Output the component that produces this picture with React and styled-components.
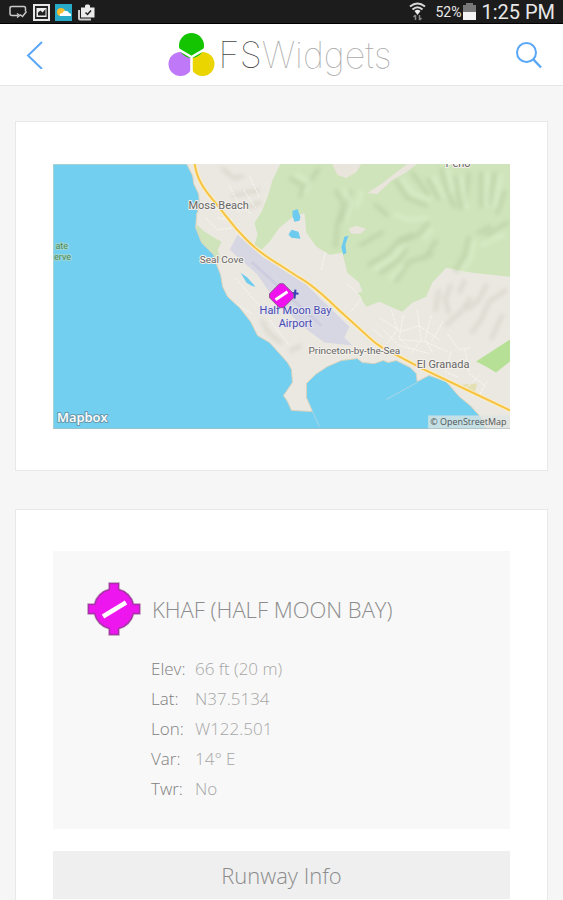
import React from 'react';
import styled, { createGlobalStyle } from 'styled-components';

const GlobalStyle = createGlobalStyle`
  * {
    box-sizing: border-box;
  }

  html {
    scrollbar-width: none;
  }

  body {
    margin: 0;
    background-color: #f6f6f6;
    color: #a0a0a0;
    font-family: 'Open Sans', sans-serif;
    font-weight: 300;
  }
`;

const StatusBar = styled.div`
  display: flex;
  justify-content: space-between;
  align-items: center;
  height: 24px;
  padding: 0 8px;
  background-color: #1c1c1c;
  border-bottom: 1px solid #000;
  color: #e8e8e8;
  font-family: Roboto, sans-serif;
  font-weight: 400;
`;

const StatusGroup = styled.div`
  display: flex;
  align-items: center;
  gap: ${(props) => props.$gap}px;
`;

const BatteryLevel = styled.span`
  margin-left: 7px;
  font-size: 14px;
  line-height: 24px;
`;

const Clock = styled.span`
  margin-left: 3px;
  font-size: 20px;
  line-height: 24px;
`;

const Header = styled.header`
  display: flex;
  justify-content: space-between;
  align-items: center;
  height: 62px;
  padding: 0 16px;
  background-color: #fff;
  border-bottom: 1px solid #e6e6e6;
`;

const IconButton = styled.button`
  display: flex;
  padding: 4px;
  background: none;
  border: 0;
  color: #5aa7f7;
  cursor: pointer;
`;

const Brand = styled.a`
  display: flex;
  align-items: center;
  gap: 4px;
  margin-right: 4px;
  color: #a8a8a8;
  font-family: Inter, sans-serif;
  font-size: 36px;
  font-weight: 100;
  line-height: 44px;
  text-decoration: none;
`;

const BrandStrong = styled.span`
  color: #444;
`;

const Content = styled.main`
  display: flex;
  flex-direction: column;
  gap: 38px;
  padding: 35px 15px;
`;

const Card = styled.section`
  display: flex;
  flex-direction: column;
  gap: 22px;
  padding: 41px 37px;
  background-color: #fff;
  border: 1px solid #e8e8e8;
`;

const MapPicture = styled.svg`
  display: block;
  width: 100%;
  height: auto;
  margin-top: 1px;
`;

const MapLabel = styled.text`
  fill: ${(props) => props.$color || '#666'};
  font-family: ${(props) => (props.$open ? "'Open Sans'" : 'Roboto')}, sans-serif;
  font-size: ${(props) => props.$size || 10}px;
  font-weight: ${(props) => props.$weight || 400};
  paint-order: stroke;
  stroke: ${(props) => props.$halo || '#f4f1ec'};
  stroke-width: 2px;
  stroke-linejoin: round;
  text-anchor: ${(props) => props.$anchor || 'middle'};
`;

const InfoPanel = styled.div`
  padding: 31px 34px 25px;
  background-color: #f8f8f8;
`;

const InfoHeading = styled.div`
  display: flex;
  align-items: center;
  gap: 11px;
`;

const InfoTitle = styled.h1`
  margin: 0;
  color: #8c8c8c;
  font-size: 22px;
  font-weight: 300;
  line-height: 30px;
`;

const InfoList = styled.dl`
  margin: 18px 0 0 64px;
  font-size: 17px;
  line-height: 30px;
`;

const InfoRow = styled.div`
  display: flex;
`;

const InfoLabel = styled.dt`
  width: 44px;
  color: #808080;
`;

const InfoValue = styled.dd`
  margin: 0;
  color: #a6a6a6;
`;

const SectionButton = styled.button`
  height: 48px;
  padding: 0;
  background-color: #efefef;
  border: 0;
  color: #8c8c8c;
  font-family: inherit;
  font-size: 22px;
  font-weight: 300;
  line-height: 30px;
  cursor: pointer;
`;

const airport = [
  { label: 'Elev:', value: '66 ft (20 m)' },
  { label: 'Lat:', value: 'N37.5134' },
  { label: 'Lon:', value: 'W122.501' },
  { label: 'Var:', value: '14° E' },
  { label: 'Twr:', value: 'No' },
];

const highway =
  'M195 164C197 178 203 188 215 202L227 217Q236 229 247 240C257 250 268 258 280 265L300 278C318 288 332 304 347 317L370 338Q376 344 383 348L423 369L467 390L511 411';

// Dark and light sides of the ridges
const ridges = [
  'M290 178l14 8l-4 12M320 168l-14 20M336 190l8 14l-6 20l-2 24M352 190l-4 18l-6 14',
  'M375 204l14 12M396 180l12 18l20 8M412 172l18 24M428 178l12 22M442 168l6 24l8 16M456 176l6 34M470 172l-4 32M482 172v36M496 172l-6 34M506 190l-8 24',
  'M368 266l20-12l12-14l14-6M380 274l20-14l8-12M396 282l14-20l24-8M430 222l-10 12l-20 10M438 240l-14 20M470 236l-4 18l-10 18M492 226l-14 8M510 222l-24 14M360 246l24-14',
];

const lightRidges = [
  'M296 174l14 8l-4 12M344 188l8 14l-6 20M362 190l-4 18M402 178l12 16l18 6M434 176l12 22M448 168l6 24M462 176l6 34M488 172v36M502 174l-6 34',
  'M374 270l20-12l12-14M390 280l14-14M434 228l-10 12M476 240l-4 18l-10 14M506 234l-24 12M394 214l16 6l20-2',
];

const barren = [
  'M440 290l-4 22M452 284l-6 16l4 14M472 298l-10 14l-16 14M488 284l-8 16l-12 10M508 290l-18 12l-8 18l-10 14M504 314l-12 26M466 280l-6 14',
  'M222 168l12 10l10-2M232 196l28-6M248 208l14-6M262 320l6 12l14 12M290 352l12-6',
];

const streets = [
  'M380 318l22 14l18-6l20 14M392 310l6 20l-10 14M404 316l-4 22l12 12M418 310l4 30l-10 14M432 316l-6 24l8 14M444 322l-12 20M400 340l26 2l22 10M384 330l16 16l30 8M448 334l12 16l12-2M452 352l-6 20l14 6M466 350l4 24l16 12M480 376l-14 14M488 382l-8 14M374 330l10 8',
  'M214 210l14-6l12 8M218 218l16 2M230 186l10 20l12 8M240 240l14 10M206 218l12 12l14-2M244 190l12 18M250 176l10 22M322 270l4-18M348 284l14 14l-10 14M230 300l22 14M236 278l20 24l14 14M270 320l20 26',
];

const AirportGlyph = ({ size = 54 }) => (
  <svg width={size} height={size} viewBox="0 0 54 54" aria-hidden="true">
    <path
      d="M22.500 1.500h9v6a20 20 0 0 1 14.800 15h6.200v9h-6.200a20 20 0 0 1-14.800 15v6h-9v-6a20 20 0 0 1-14.800-15H1.500v-9h6.200a20 20 0 0 1 14.800-15z"
      fill="#dcdcdc"
      stroke="#d6d9d3"
      strokeWidth="3"
    />
    <path
      d="M22.500 1.500h9v6a20 20 0 0 1 14.800 15h6.200v9h-6.200a20 20 0 0 1-14.800 15v6h-9v-6a20 20 0 0 1-14.800-15H1.500v-9h6.200a20 20 0 0 1 14.800-15z"
      fill="#ee16ee"
      stroke="#ad2fae"
      strokeWidth="1.500"
    />
    <path d="M16 34.500L39 20.500" stroke="#fff" strokeWidth="4.500" />
  </svg>
);

const AirportMap = () => (
  <MapPicture viewBox="53 164 458 266" role="img" aria-label="Map of Half Moon Bay Airport">
    <defs>
      <filter id="soft">
        <feGaussianBlur stdDeviation="2" />
      </filter>
    </defs>
    <rect x="53" y="164" width="458" height="266" fill="#ebe8e1" />

    <g fill="#cfe4ba">
      <path d="M281 164L273 180L268 197L262 212L255 223L258 235L255 245L262 250L270 242L280 228L293 217L305 213L307 233L317 247L330 255L343 253L348 273L360 283L363 292L358 293L367 307L380 302L403 312L413 303L427 297L433 283L447 268L473 273L511 277V164z" />
      <path d="M197 225L205 232L213 237L222 242L218 250L221 258L218 266L212 255L202 244L196 232z" />
      <path d="M477 362L511 340V362L497 373L487 367z" fill="#b5e096" />
      <path d="M463 385l15-1l-2 9z" fill="#e3e0b4" />
    </g>
    <g fill="#e9e5dd">
      <path d="M333 164L338 175L347 178L357 172L362 164z" />
      <path d="M368 193L382 184L400 170L408 164H418L406 173L392 181L378 194z" />
      <path d="M349 229l8-3l10 3l-6 5h-9z" />
    </g>

    <g fill="none" filter="url(#soft)" strokeLinejoin="round">
      {ridges.map((d) => (
        <path key={d} d={d} stroke="#b4ca9e" strokeWidth="4" opacity="0.6" />
      ))}
      {lightRidges.map((d) => (
        <path key={d} d={d} stroke="#dcf0cc" strokeWidth="4" opacity="0.7" />
      ))}
      {barren.map((d) => (
        <path key={d} d={d} stroke="#d3cfc5" strokeWidth="4" opacity="0.65" />
      ))}
    </g>
    <g fill="none" stroke="#f7f5f1" strokeWidth="1" strokeDasharray="3 1">
      {streets.map((d) => (
        <path key={d} d={d} />
      ))}
    </g>

    <path
      d="M238 235L263 257L307 285L350 327L345 338L353 346L325 343L305 328L275 300L258 275L230 250z"
      fill="#d7d7e3"
    />
    <path d="M252 262L322 326" stroke="#cdcddf" strokeWidth="3" />

    {/* Ocean, with the headland and the harbour cut into it */}
    <path
      d="M53 164H187L193 176L194 184L199 194L200 206L197 214L196 228L202 243L214 255L217 265L221 275L223 287L228 297L240 308L251 322L258 336L270 343L280 354L288 363L292 370L293 383L284 396L288 402L292 411L313 412L307 398V384L316 375L328 367L342 361L358 359L363 363L375 364L384 361L389 363L397 361L411 368L417 374L418 382L430 376L447 382L460 397L471 406L482 418L487 430H53z"
      fill="#73cff0"
      stroke="#d9d3bd"
      strokeWidth="1"
    />
    <path d="M313 412l7 15M387 400l31-17" stroke="#a9d5e2" strokeWidth="1" />
    <g fill="#6ccbee">
      <path d="M293 211l5-2l3 8l-1 4l-5 1l-2-6z" />
      <path d="M292 230l7 2l2 7l-9-1l-3-3z" />
      <path d="M345 237l4-1l-3 9l1 8l-3 2l-2-7z" />
      <path d="M241 273l7 5l8 9l-4-1l-5-3z" />
    </g>

    <path d={highway} fill="none" stroke="#fbeec4" strokeWidth="4" />
    <path d={highway} fill="none" stroke="#f6c343" strokeWidth="2" />

    <MapLabel x="219" y="209" $size="11">Moss Beach</MapLabel>
    <MapLabel x="222" y="263">Seal Cove</MapLabel>
    <MapLabel x="355" y="354">Princeton-by-the-Sea</MapLabel>
    <MapLabel x="444" y="368" $size="11">El Granada</MapLabel>
    <MapLabel x="459" y="167" $size="11">Peño</MapLabel>
    <MapLabel x="68" y="249" $size="9" $color="#4e8a60" $halo="#9fd6cf" $anchor="end">ate</MapLabel>
    <MapLabel x="71" y="260" $size="9" $color="#4e8a60" $halo="#9fd6cf" $anchor="end">erve</MapLabel>
    <MapLabel x="296" y="314" $size="11" $color="#4a4bb0" $halo="#e6e6ef">Half Moon Bay</MapLabel>
    <MapLabel x="296" y="327" $size="11" $color="#4a4bb0" $halo="#e6e6ef">Airport</MapLabel>

    <path d="M291 293l8 1M296 290l-1 9" stroke="#3540b4" strokeWidth="2" />
    <path
      d="M280 284h4l10 10v4l-10 10h-4l-10-10v-4z"
      fill="#f012ee"
      stroke="#8f5590"
      strokeWidth="1"
    />
    <path d="M276 300L288 292" stroke="#fff" strokeWidth="3" />

    <MapLabel x="57" y="423" $open $size="13" $weight="600" $color="#fff" $halo="#6a9aac" $anchor="start">
      Mapbox
    </MapLabel>
    <rect x="429" y="416" width="82" height="14" fill="#dfe5e2" opacity="0.75" />
    <MapLabel x="431" y="426" $size="9" $color="#555" $halo="none" $open $anchor="start">
      © OpenStreetMap
    </MapLabel>
    <path d="M53 429.500H511" stroke="#a9b8b8" strokeWidth="1" />
  </MapPicture>
);

const StatusIcons = () => (
  <svg width="90" height="18" viewBox="8 3 90 18" aria-hidden="true">
    <path d="M18 15.500h-6q-2 0-2-2V8q0-1.500 2-1.500h12q1.500 0 1.500 2v3" fill="none" stroke="#c9c9c9" strokeWidth="1.500" />
    <path d="M17 13.500l2.500 2l-2.500 2M20 14.500l2.500 2l4-5" fill="none" stroke="#c9c9c9" strokeWidth="1.500" />
    <rect x="34" y="5" width="15" height="15" fill="#222" stroke="#e8e8e8" strokeWidth="2" />
    <path d="M36.500 8h10v9h-10z" fill="#eee" />
    <path d="M38 15.500v-3l2.500-2l2 2l3-3.500v6.500z" fill="#222" />
    <rect x="55" y="4" width="17" height="17" fill="#28abc8" />
    <circle cx="61" cy="12" r="4" fill="#f7bd2e" />
    <path d="M60 16q-1-3 2.500-3q1-3 4-2q2 0 2.500 2q2.500 0 2 3z" fill="#fff" />
    <path d="M79 10v8.500q0 1 1 1h11" fill="none" stroke="#ccc" strokeWidth="2" />
    <path d="M81 7.500h4v-1.500q0-1.500 1.500-1.500h2q1.500 0 1.500 1.500v1.500h4.500v10H81z" fill="#ececec" />
    <path d="M85.500 12.500l2 2l3.500-4" fill="none" stroke="#222" strokeWidth="1.500" />
  </svg>
);

const WifiIcon = () => (
  <svg width="17" height="19" viewBox="0 0 17 19" aria-hidden="true">
    <g fill="none" stroke="#d9d9d9" strokeWidth="2">
      <path d="M1 4.500Q8.500-1.500 16 4.500" />
      <path d="M3.500 7.500Q8.500 3 13.500 7.500" />
    </g>
    <path d="M5.500 9Q8.500 6.500 11.500 9L8.500 13z" fill="#eee" />
    <path d="M6.500 18v-5M4.500 15l2-2M10.500 13v5M12.500 16l-2 2" stroke="#888" strokeWidth="1.500" />
  </svg>
);

const BatteryIcon = () => (
  <svg width="13" height="17" viewBox="0 0 13 17" aria-hidden="true">
    <path d="M3 0h7v2h3v7H0V2h3z" fill="#777" />
    <rect y="9" width="13" height="8" fill="#f4f4f4" />
  </svg>
);

const BrandMark = () => (
  <svg width="47" height="44" viewBox="0 0 47 44" aria-hidden="true">
    <circle cx="12.500" cy="31" r="12" fill="#bf78f7" />
    <circle cx="34.500" cy="31" r="12" fill="#ead500" />
    <circle cx="23.500" cy="12.500" r="12.500" fill="#14c400" />
    <path d="M23.500 24V44M23.500 24L9 15.500M23.500 24L38 15.500" stroke="#fff" strokeWidth="2.500" />
  </svg>
);

const App = () => {
  return (
    <>
      <GlobalStyle />
      <StatusBar>
        <StatusGroup $gap={0}>
          <StatusIcons />
        </StatusGroup>
        <StatusGroup $gap={2}>
          <WifiIcon />
          <BatteryLevel>52%</BatteryLevel>
          <BatteryIcon />
          <Clock>1:25 PM</Clock>
        </StatusGroup>
      </StatusBar>
      <Header>
        <IconButton type="button" aria-label="Back">
          <svg width="28" height="28" viewBox="0 0 28 28" fill="none" stroke="currentColor" strokeWidth="2">
            <path d="M22 1L8 14.500L22 28" />
          </svg>
        </IconButton>
        <Brand href="#">
          <BrandMark />
          <span>
            <BrandStrong>FS</BrandStrong>Widgets
          </span>
        </Brand>
        <IconButton type="button" aria-label="Search">
          <svg width="28" height="28" viewBox="0 0 28 28" fill="none" stroke="currentColor" strokeWidth="2">
            <circle cx="11.500" cy="11.500" r="9.500" />
            <path d="M18 18L26 26.500" strokeWidth="2.500" />
          </svg>
        </IconButton>
      </Header>
      <Content>
        <Card>
          <AirportMap />
        </Card>
        <Card>
          <InfoPanel>
            <InfoHeading>
              <AirportGlyph />
              <InfoTitle>KHAF (HALF MOON BAY)</InfoTitle>
            </InfoHeading>
            <InfoList>
              {airport.map((item) => (
                <InfoRow key={item.label}>
                  <InfoLabel>{item.label}</InfoLabel>
                  <InfoValue>{item.value}</InfoValue>
                </InfoRow>
              ))}
            </InfoList>
          </InfoPanel>
          <SectionButton type="button">Runway Info</SectionButton>
        </Card>
      </Content>
    </>
  );
};

export default App;
